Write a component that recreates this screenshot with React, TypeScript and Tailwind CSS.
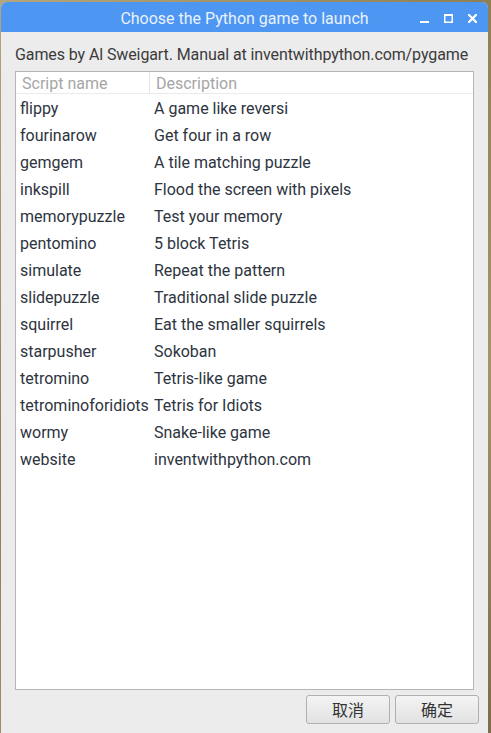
const games: [string, string][] = [
  ["flippy", "A game like reversi"],
  ["fourinarow", "Get four in a row"],
  ["gemgem", "A tile matching puzzle"],
  ["inkspill", "Flood the screen with pixels"],
  ["memorypuzzle", "Test your memory"],
  ["pentomino", "5 block Tetris"],
  ["simulate", "Repeat the pattern"],
  ["slidepuzzle", "Traditional slide puzzle"],
  ["squirrel", "Eat the smaller squirrels"],
  ["starpusher", "Sokoban"],
  ["tetromino", "Tetris-like game"],
  ["tetrominoforidiots", "Tetris for Idiots"],
  ["wormy", "Snake-like game"],
  ["website", "inventwithpython.com"],
];

function TitleButtons() {
  return (
    <div className="absolute right-[11px] top-[11px] flex items-center gap-[15px]">
      <svg width="9" height="10" viewBox="0 0 9 10">
        <rect x="0" y="8" width="9" height="2" fill="white" />
      </svg>
      <svg width="9" height="9" viewBox="0 0 9 9">
        <rect x="0.75" y="0.75" width="7.5" height="7.5" fill="none" stroke="white" strokeWidth="1.5" />
        <rect x="0" y="0" width="9" height="2" fill="white" />
      </svg>
      <svg width="9" height="9" viewBox="0 0 9 9">
        <path d="M1 1 L8 8 M8 1 L1 8" stroke="white" strokeWidth="2.2" strokeLinecap="square" />
      </svg>
    </div>
  );
}

export default function App() {
  return (
    <div className="h-[733px] w-[491px] overflow-hidden bg-[linear-gradient(135deg,#b4a67c,#8f7f55_40%,#a5956a_70%,#7d6d48)] pl-[1px] pt-[2px] font-['Roboto',sans-serif]">
      <div className="flex h-[731px] w-[487px] flex-col rounded-t-[6px] bg-[#ececec]">
        <div className="relative h-[30px] rounded-t-[6px] bg-[#4d96f1] text-center text-[16px] leading-[33px] text-[#e9f2fe]">
          Choose the Python game to launch
          <TitleButtons />
        </div>

        <div className="whitespace-nowrap px-[14px] pt-[13px] text-[16px] leading-[20px] tracking-[-0.1px] text-[#3b3b3b]">
          Games by Al Sweigart. Manual at inventwithpython.com/pygame
        </div>

        <div className="mx-[14px] mt-[6px] flex h-[619px] flex-col border border-[#b5b5b5] bg-white">
          <div className="flex h-[22px] border-b border-[#ebebeb] text-[16px] leading-[23px] text-[#a6a6a6]">
            <div className="w-[134px] border-r border-[#e4e4e4] pl-[6px]">Script name</div>
            <div className="pl-[6px]">Description</div>
          </div>
          <div className="flex flex-col pt-[1px] text-[16px] text-[#2d3440]">
            {games.map(([name, desc]) => (
              <div key={name} className="flex h-[27px] items-center leading-[27px]">
                <div className="w-[134px] pl-[4px]">{name}</div>
                <div className="pl-[4px]">{desc}</div>
              </div>
            ))}
          </div>
        </div>

        <div className="flex justify-end gap-[5px] pr-[9px] pt-[5px]">
          <button className="h-[29px] w-[84px] rounded-[3px] border border-[#b0b0b0] bg-[linear-gradient(#f4f4f4,#e2e2e2)] font-['Noto_Sans_CJK_SC',sans-serif] text-[16px] leading-[27px] text-[#333]">
            取消
          </button>
          <button className="h-[29px] w-[84px] rounded-[3px] border border-[#b0b0b0] bg-[linear-gradient(#f4f4f4,#e2e2e2)] font-['Noto_Sans_CJK_SC',sans-serif] text-[16px] leading-[27px] text-[#333]">
            确定
          </button>
        </div>
      </div>
    </div>
  );
}
